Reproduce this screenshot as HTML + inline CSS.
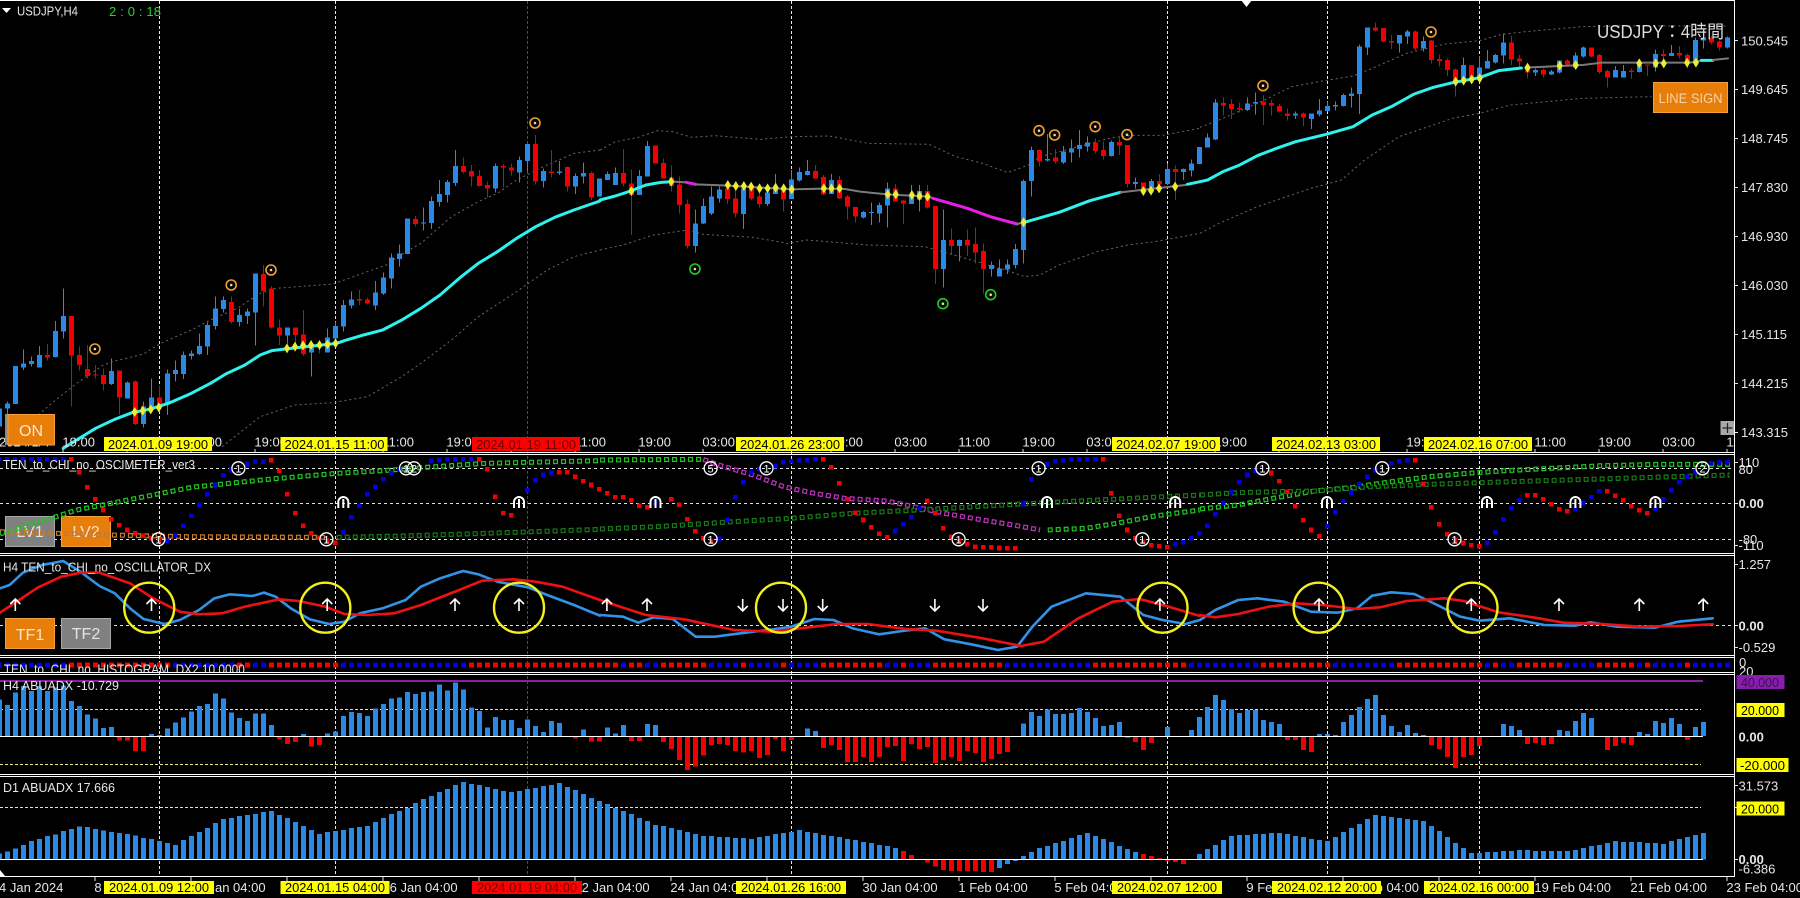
<!DOCTYPE html>
<html lang="ja"><head><meta charset="utf-8"><title>USDJPY,H4</title>
<style>
html,body{margin:0;padding:0;background:#000;overflow:hidden}
svg{display:block}
text{font-family:"Liberation Sans","Noto Sans CJK JP",sans-serif;font-size:13px;fill:#e6e6e6}
.n{vector-effect:non-scaling-stroke;fill:none}
.c{shape-rendering:crispEdges}
.tk{fill:#000}
.rk{fill:#6b0000}
.d{font-size:11px;text-anchor:middle;fill:#fff}
.bt{font-size:16px;text-anchor:middle;fill:#fbe2c4}
.bg{font-size:16px;text-anchor:middle;fill:#e4e4e4}
</style></head><body>
<svg width="1800" height="898" viewBox="0 0 1800 898" xmlns="http://www.w3.org/2000/svg">
<defs>
<path id="p1" class="n" transform="translate(0 430) scale(.38265 .33333)" d="M0 305L140 310 360 317 490 320 850 322"/>
<path id="p2" class="n" transform="translate(0 430) scale(.38265 .33333)" d="M880 322L1050 318 1270 310 1568 298"/>
<path id="p3" class="n" transform="translate(0 430) scale(.38265 .33333)" d="M0 312L120 270 200 240 290 220 400 195 500 172 600 160 700 148 800 138 880 130 1000 122 1100 113 1200 105 1270 100 1568 92"/>
<path id="p4" class="n" transform="translate(600 430) scale(.38265 .33333)" d="M0 90L270 88"/>
<path id="p5" class="n" transform="translate(600 430) scale(.38265 .33333)" d="M270 88L310 105 400 135 480 170 560 190 640 205 750 213 840 235 900 250 1000 270 1080 285 1150 300"/>
<path id="p6" class="n" transform="translate(600 430) scale(.38265 .33333)" d="M1170 300L1270 295 1350 280 1450 258 1568 240"/>
<path id="p7" class="n" transform="translate(600 430) scale(.38265 .33333)" d="M0 297L150 290 350 275 500 265 660 250 830 240 950 232 1100 222 1300 210 1568 195"/>
<path id="p8" class="n" transform="translate(1200 430) scale(.38265 .33333)" d="M0 237L100 225 200 203 300 183 400 172 500 155 600 140 700 130 800 122 950 113 1050 107 1200 103 1385 103"/>
<path id="p9" class="n" transform="translate(1200 430) scale(.38265 .33333)" d="M0 195L100 188 200 185 300 183 450 170 600 163 730 158 900 152 1100 145 1385 135"/>
<mask id="hollow" maskUnits="userSpaceOnUse" x="0" y="440" width="1800" height="120">
<rect x="0" y="440" width="1800" height="120" fill="#fff"/>
<g stroke="#000" stroke-width="2.600" stroke-dasharray="2.600 5.400" stroke-dashoffset="-1.200" fill="none">
<use href="#p1"/><use href="#p2"/><use href="#p3"/><use href="#p4"/><use href="#p5"/><use href="#p6"/><use href="#p7"/><use href="#p8"/><use href="#p9"/>
</g></mask>
<clipPath id="hc"><rect x="0" y="658" width="1734" height="14"/></clipPath>
</defs>
<rect width="1800" height="898" fill="#000"/>

<!-- vertical lines -->
<path d="M159.5 1V876M335.5 1V876M791.5 1V876M1167.5 1V876M1327.5 1V876M1479.5 1V876" stroke="#f4f490" stroke-width="1" stroke-dasharray="3 2" class="c"/>
<path d="M527.5 1V876" stroke="#b82020" stroke-width="1" stroke-dasharray="3 2" class="c"/>

<!-- envelopes -->
<g stroke="#6a6a6a" stroke-width="1" stroke-dasharray="2 3" fill="none">
<path class="n" transform="scale(.38265 .33333)" d="M100 1245L140 1205 200 1150 270 1095 300 1083 375 1062 420 1030 500 990 550 960 620 925 680 880 720 865 870 852 960 815 1010 795 1040 770 1100 730 1180 650 1250 605 1300 580 1350 540 1420 500 1500 460 1568 450"/>
<path class="n" transform="scale(.38265 .33333)" d="M580 1340L680 1250 770 1215 870 1208 960 1190 1050 1130 1100 1090 1180 1020 1250 950 1350 875 1430 810 1500 770 1568 750"/>
<path class="n" transform="translate(600 0) scale(.38265 .33333)" d="M0 450L40 425 100 412 150 392 190 395 240 412 300 407 420 418 500 410 600 408 700 430 860 433 930 470 1000 490 1065 518 1120 495 1150 470 1250 440 1330 415 1390 406 1470 406 1568 385"/>
<path class="n" transform="translate(600 0) scale(.38265 .33333)" d="M0 750L60 735 140 705 230 690 270 703 400 712 490 730 540 720 700 735 850 740 940 770 1060 810 1110 830 1150 825 1200 795 1300 755 1380 735 1450 725 1568 700"/>
<path class="n" transform="translate(1200 0) scale(.38265 .33333)" d="M0 382L50 360 150 310 240 260 320 243 400 228 450 205 540 160 640 132 730 122 790 103 850 95 1000 80 1100 78 1380 78"/>
<path class="n" transform="translate(1200 0) scale(.38265 .33333)" d="M0 700L50 670 150 620 290 565 370 540 430 480 520 410 660 355 730 340 810 315 1000 295 1180 290"/>
</g>

<!-- candles -->
<g transform="translate(7.3 0) scale(8 .33333)" class="c">
<path class="n" stroke="#2a88e6" stroke-width="1" d="M0 1205V1245M2 1048V1110M3 1070V1100M4 1038V1103M6 963V1073M7 865V1015M13 1075V1155M15 1145V1195M17 1205V1283M18 1135V1235M20 1108V1245M21 1082V1145M22 1055V1137M23 1052V1078M24 1000V1065M25 968V1065M26 890V988M27 890V938M29 925V980M30 925V972M31 820V1037M35 982V1030M38 1025V1130M40 985V1058M41 965V1040M42 900V995M43 875V925M46 843V930M47 817V885M48 760V865M49 733V800M52 622V692M53 590V687M54 540V620M55 540V608M56 450V558M61 490V578M64 470V548M65 432V515M67 505V563M69 483V525M71 520V582M72 487V550M75 515V540M76 502V555M79 510V585M80 423V530M86 628V758M87 595V672M88 560V645M89 560V608M92 555V687M95 555V618M96 522V582M98 510V597M99 502V545M100 480V527M103 522V582M107 633V655M108 608V675M109 608V668M110 548V683M113 555V612M114 555V635M117 628V863M119 718V785M123 785V830M124 778V830M125 778V822M126 732V805M127 538V790M128 440V590M130 402V485M132 438V492M133 418V487M134 390V472M135 410V455M138 422V470M141 532V565M143 537V572M145 490V555M147 505V540M148 478V530M150 400V443M151 297V420M155 293V333M156 278V343M161 335V357M163 340V387M164 297V350M165 305V335M166 305V332M167 280V320M168 263V322M169 133V342M170 83V165M174 105V158M175 90V132M177 110V155M182 172V245M184 168V245M185 150V205M186 162V190M187 100V190M191 205V228M193 210V225M194 181V220M196 158V205M197 140V172M201 198V233M202 195V233M204 180V218M206 148V215M208 135V168M211 113V195M212 108V145M215 110V145"/>
<path class="n" stroke="#e40000" stroke-width="1" d="M5 1032V1082M8 948V1220M9 1040V1112M10 1035V1135M11 1095V1135M12 1105V1172M14 1112V1243M16 1142V1275M19 1157V1235M28 890V970M32 795V920M33 858V985M34 958V1035M36 982V1040M37 930V1068M39 1022V1060M44 870V915M45 893V913M51 648V680M57 472V520M58 495V560M59 510V560M60 545V593M62 492V563M63 490V527M66 405V553M68 450V533M70 500V575M73 515V600M77 447V560M78 508V705M81 437V491M82 475V535M83 497V575M84 530V640M85 598V745M90 548V612M91 548V652M93 552V600M94 555V622M97 555V635M101 495V537M102 525V585M104 528V597M105 585V658M106 621V668M111 552V605M112 600V672M115 555V625M116 618V852M118 685V765M120 688V768M121 682V790M122 730V880M129 450V500M131 447V490M136 415V460M137 425V478M139 408V465M140 435V563M142 548V580M144 522V575M146 497V600M152 293V347M153 297V357M154 307V337M157 287V375M158 300V347M159 312V338M160 325V362M162 337V378M171 67V95M172 84V128M173 105V147M176 92V155M178 120V190M179 163V200M180 175V228M181 205V290M183 195V247M188 108V195M189 165V202M190 190V235M192 205V232M195 178V200M198 143V172M199 162V222M200 208V263M203 205V237M205 193V228M207 148V198M209 138V175M210 160V205M213 108V134M214 122V152"/>
<path class="n" stroke="#2a88e6" stroke-width="5" d="M-1 1225V1280M0 1210V1225M1 1098V1212M2 1090V1102M3 1083V1092M4 1065V1103M6 993V1071M7 948V995M13 1113V1152M15 1148V1195M17 1220V1272M18 1193V1222M20 1120V1213M21 1110V1122M22 1065V1122M23 1060V1068M24 1038V1062M25 975V1040M26 925V978M27 900V927M29 945V966M30 935V948M31 820V938M35 982V1007M38 1033V1058M40 1012V1058M41 978V1015M42 915V980M43 898V917M46 877V917M47 833V880M48 773V836M49 760V777M50 656V762M52 667V671M53 603V669M54 582V606M55 546V585M56 498V549M61 498V565M64 480V518M65 432V483M67 513V543M69 514V519M71 528V560M72 519V530M74 535V590M75 522V540M76 519V555M79 528V585M80 438V530M86 670V738M87 618V670M88 590V640M89 568V595M92 565V642M95 578V612M96 560V582M98 538V597M99 516V542M100 513V525M103 540V582M107 636V652M108 636V639M109 615V640M110 566V617M113 583V612M114 573V598M117 720V807M119 720V738M123 795V807M124 805V830M125 793V808M126 747V795M127 543V750M128 450V543M130 477V481M132 454V487M133 445V458M134 435V447M135 427V439M138 426V468M141 546V552M143 543V570M145 507V552M147 507V516M148 490V512M149 441V492M150 413V443M151 308V418M155 310V330M156 306V310M161 340V347M163 340V357M164 331V343M165 318V333M166 315V320M167 285V318M168 280V288M169 140V282M170 83V143M174 105V130M175 95V110M177 123V145M182 195V243M184 202V233M185 183V205M186 165V187M187 128V167M191 210V218M193 215V224M194 181V218M196 167V203M197 142V170M201 210V232M202 213V232M204 195V216M206 162V202M208 159V168M211 120V185M212 112V122M215 113V142"/>
<path class="n" stroke="#f00000" stroke-width="5" d="M5 1065V1072M8 948V1067M9 1065V1095M10 1107V1128M11 1123V1127M12 1125V1152M14 1112V1193M16 1145V1272M19 1193V1225M28 906V966M32 822V873M33 866V983M34 982V1007M36 982V1005M37 1003V1062M39 1030V1043M44 897V901M45 898V911M51 657V672M57 498V516M58 513V530M59 528V558M60 555V565M62 498V502M63 502V512M66 432V545M68 514V519M70 501V560M73 519V593M77 519V550M78 550V585M81 437V491M82 489V535M83 533V558M84 553V615M85 612V738M90 565V597M91 595V640M93 560V595M94 590V612M97 563V598M101 513V535M102 531V583M104 540V595M105 590V620M106 621V650M111 566V605M112 602V611M115 573V622M116 618V807M118 720V738M120 720V736M121 732V757M122 753V807M129 450V485M131 473V485M136 427V453M137 450V468M139 426V437M140 435V552M142 548V570M144 543V553M146 507V516M152 309V316M153 312V327M154 324V328M157 304V315M158 309V317M159 318V335M160 340V348M162 340V353M171 83V91M172 84V125M173 123V127M176 95V145M178 122V180M179 177V183M180 180V210M181 208V245M183 195V235M188 127V178M189 175V185M190 197V218M192 210V224M195 181V193M198 143V170M199 165V216M200 213V232M203 212V216M205 193V197M207 162V168M209 159V166M210 165V185M213 112V128M214 125V142"/>
</g>

<!-- moving average -->
<g fill="none" stroke-width="3" stroke-linejoin="round" stroke-linecap="round">
<path class="n" stroke="#2ef2ee" transform="scale(.38265 .33333)" d="M165 1345L200 1320 250 1285 300 1258 345 1238 390 1228 440 1210 500 1180 550 1150 590 1122 640 1095 680 1065 710 1052 745 1047 880 1030 900 1022 950 1005 1000 990 1050 960 1100 925 1150 885 1200 835 1250 790 1300 755 1350 715 1400 680 1450 652 1500 630 1568 603"/>
<path class="n" stroke="#2ef2ee" transform="translate(600 0) scale(.38265 .33333)" d="M0 600L40 588 80 573 120 555 160 547 190 545"/>
<path class="n" stroke="#7a7a7a" stroke-width="2" transform="translate(600 0) scale(.38265 .33333)" d="M190 545L225 547"/>
<path class="n" stroke="#e61ee6" transform="translate(600 0) scale(.38265 .33333)" d="M225 547L250 553"/>
<path class="n" stroke="#7a7a7a" stroke-width="2" transform="translate(600 0) scale(.38265 .33333)" d="M250 553L320 556 500 568 580 566 640 567 680 575 750 583 860 590 870 595"/>
<path class="n" stroke="#e61ee6" transform="translate(600 0) scale(.38265 .33333)" d="M870 595L960 625 1020 650 1090 672"/>
<path class="n" stroke="#7a7a7a" stroke-width="2" transform="translate(600 0) scale(.38265 .33333)" d="M1090 672L1115 665"/>
<path class="n" stroke="#2ef2ee" transform="translate(600 0) scale(.38265 .33333)" d="M1115 665L1200 637 1280 602 1360 577"/>
<path class="n" stroke="#7a7a7a" stroke-width="2" transform="translate(600 0) scale(.38265 .33333)" d="M1360 577L1530 555"/>
<path class="n" stroke="#2ef2ee" transform="translate(600 0) scale(.38265 .33333)" d="M1535 553L1568 545"/>
<path class="n" stroke="#2ef2ee" transform="translate(1200 0) scale(.38265 .33333)" d="M0 545L20 540 60 515 100 497 150 467 200 445 250 425 330 403 400 380 450 345 500 320 560 282 610 262 660 248 730 233 780 212 840 204"/>
<path class="n" stroke="#7a7a7a" stroke-width="2" transform="translate(1200 0) scale(.38265 .33333)" d="M850 203L1000 195 1050 188 1280 188 1305 183"/>
<path class="n" stroke="#2ef2ee" transform="translate(1200 0) scale(.38265 .33333)" d="M1310 181L1340 181"/>
<path class="n" stroke="#7a7a7a" stroke-width="2" transform="translate(1200 0) scale(.38265 .33333)" d="M1340 180L1380 175"/>
</g>

<!-- yellow diamonds -->
<path fill="#ecec34" transform="scale(.38265 .33333)" d="M352 1221l8 15-8 15-8-15zM373 1217l8 15-8 15-8-15zM394 1213l8 15-8 15-8-15zM415 1207l8 15-8 15-8-15zM750 1030l8 15-8 15-8-15zM771 1025l8 15-8 15-8-15zM792 1021l8 15-8 15-8-15zM813 1020l8 15-8 15-8-15zM835 1020l8 15-8 15-8-15zM856 1018l8 15-8 15-8-15zM877 1015l8 15-8 15-8-15z"/>
<path fill="#ecec34" transform="translate(600 0) scale(.38265 .33333)" d="M82 558l8 15-8 15-8-15zM186 530l8 15-8 15-8-15zM334 540l8 15-8 15-8-15zM355 543l8 15-8 15-8-15zM376 543l8 15-8 15-8-15zM395 545l8 15-8 15-8-15zM417 550l8 15-8 15-8-15zM438 550l8 15-8 15-8-15zM459 548l8 15-8 15-8-15zM480 550l8 15-8 15-8-15zM501 553l8 15-8 15-8-15zM585 550l8 15-8 15-8-15zM605 550l8 15-8 15-8-15zM626 550l8 15-8 15-8-15zM752 568l8 15-8 15-8-15zM773 568l8 15-8 15-8-15zM815 570l8 15-8 15-8-15zM835 573l8 15-8 15-8-15zM856 575l8 15-8 15-8-15zM1107 652l8 15-8 15-8-15zM1420 558l8 15-8 15-8-15zM1440 557l8 15-8 15-8-15zM1461 550l8 15-8 15-8-15zM1503 545l8 15-8 15-8-15z"/>
<path fill="#ecec34" transform="translate(1200 0) scale(.38265 .33333)" d="M668 230l8 15-8 15-8-15zM689 227l8 15-8 15-8-15zM710 223l8 15-8 15-8-15zM731 220l8 15-8 15-8-15zM856 188l8 15-8 15-8-15zM940 182l8 15-8 15-8-15zM982 180l8 15-8 15-8-15zM1148 175l8 15-8 15-8-15zM1191 175l8 15-8 15-8-15zM1212 175l8 15-8 15-8-15zM1273 173l8 15-8 15-8-15zM1296 173l8 15-8 15-8-15z"/>

<!-- rings -->
<g fill="none" stroke="#f0a030" stroke-width="1.6">
<circle cx="94.9" cy="349" r="5"/><circle cx="231.2" cy="285" r="5"/><circle cx="271" cy="270" r="5"/><circle cx="535" cy="123" r="5"/><circle cx="1039" cy="130.7" r="5"/><circle cx="1054.6" cy="135" r="5"/><circle cx="1095.2" cy="126.7" r="5"/><circle cx="1127" cy="134.7" r="5"/><circle cx="1263" cy="85.7" r="5"/><circle cx="1431" cy="32" r="5"/>
</g>
<g fill="none" stroke="#20d020" stroke-width="1.6">
<circle cx="694.9" cy="269" r="5"/><circle cx="942.9" cy="303.7" r="5"/><circle cx="990.7" cy="294.7" r="5"/>
</g>
<g fill="#e8d8b0">
<circle cx="94.9" cy="349" r="1.3"/><circle cx="231.2" cy="285" r="1.3"/><circle cx="271" cy="270" r="1.3"/><circle cx="535" cy="123" r="1.3"/><circle cx="1039" cy="130.7" r="1.3"/><circle cx="1054.6" cy="135" r="1.3"/><circle cx="1095.2" cy="126.7" r="1.3"/><circle cx="1127" cy="134.7" r="1.3"/><circle cx="1263" cy="85.7" r="1.3"/><circle cx="1431" cy="32" r="1.3"/><circle cx="694.9" cy="269" r="1.3"/><circle cx="942.9" cy="303.7" r="1.3"/><circle cx="990.7" cy="294.7" r="1.3"/>
</g>

<!-- main time labels -->
<g>
<text x="-1" y="446.5">2024/1/4</text>
<text x="62.4" y="446.5">19:00</text><text x="126.4" y="446.5">03:00</text><text x="190.4" y="446.5">11:00</text>
<text x="254.4" y="446.5">19:00</text><text x="318.4" y="446.5">03:00</text><text x="382.4" y="446.5">11:00</text>
<text x="446.4" y="446.5">19:00</text><text x="510.4" y="446.5">03:00</text><text x="574.4" y="446.5">11:00</text>
<text x="638.4" y="446.5">19:00</text><text x="702.4" y="446.5">03:00</text><text x="766.4" y="446.5">11:00</text>
<text x="830.4" y="446.5">19:00</text><text x="894.4" y="446.5">03:00</text><text x="958.4" y="446.5">11:00</text>
<text x="1022.4" y="446.5">19:00</text><text x="1086.4" y="446.5">03:00</text><text x="1150.4" y="446.5">11:00</text>
<text x="1214.4" y="446.5">19:00</text><text x="1278.4" y="446.5">03:00</text><text x="1342.4" y="446.5">11:00</text>
<text x="1406.4" y="446.5">19:00</text><text x="1470.4" y="446.5">03:00</text><text x="1534.4" y="446.5">11:00</text>
<text x="1598.4" y="446.5">19:00</text><text x="1662.4" y="446.5">03:00</text>
<svg x="0" y="430" width="1734" height="22"><text x="1726.4" y="16.5">11:00</text></svg>
</g>
<path stroke="#e6e6e6" stroke-width="1" class="c" d="M63 449V452M127 449V452M191 449V452M255 449V452M319 449V452M383 449V452M447 449V452M511 449V452M575 449V452M639 449V452M703 449V452M767 449V452M831 449V452M895 449V452M959 449V452M1023 449V452M1087 449V452M1151 449V452M1215 449V452M1279 449V452M1343 449V452M1407 449V452M1471 449V452M1535 449V452M1599 449V452M1663 449V452M1727 449V452"/>
<!-- yellow / red main time tags -->
<g class="c"><rect x="104" y="437" width="108" height="14" fill="#ff0"/><rect x="280.5" y="437" width="107" height="14" fill="#ff0"/><rect x="472" y="437" width="108" height="14" fill="#f00"/><rect x="736" y="437" width="108" height="14" fill="#ff0"/><rect x="1112" y="437" width="108" height="14" fill="#ff0"/><rect x="1272" y="437" width="108" height="14" fill="#ff0"/><rect x="1424" y="437" width="108" height="14" fill="#ff0"/></g>
<text class="tk" x="108" y="449" textLength="100" lengthAdjust="spacingAndGlyphs">2024.01.09 19:00</text>
<text class="tk" x="284.5" y="449" textLength="100" lengthAdjust="spacingAndGlyphs">2024.01.15 11:00</text>
<text class="rk" x="476" y="449" textLength="100" lengthAdjust="spacingAndGlyphs">2024.01.19 11:00</text>
<text class="tk" x="740" y="449" textLength="100" lengthAdjust="spacingAndGlyphs">2024.01.26 23:00</text>
<text class="tk" x="1116" y="449" textLength="100" lengthAdjust="spacingAndGlyphs">2024.02.07 19:00</text>
<text class="tk" x="1276" y="449" textLength="100" lengthAdjust="spacingAndGlyphs">2024.02.13 03:00</text>
<text class="tk" x="1428" y="449" textLength="100" lengthAdjust="spacingAndGlyphs">2024.02.16 07:00</text>

<!-- price axis -->
<g>
<text x="1741" y="45.5">150.545</text><text x="1741" y="94">149.645</text><text x="1741" y="143">148.745</text><text x="1741" y="192">147.830</text><text x="1741" y="241">146.930</text><text x="1741" y="290">146.030</text><text x="1741" y="339">145.115</text><text x="1741" y="388">144.215</text><text x="1741" y="437">143.315</text>
</g>
<path stroke="#e6e6e6" class="c" d="M1735 40.500H1738M1735 89.500H1738M1735 138.500H1738M1735 187.500H1738M1735 236.500H1738M1735 285.500H1738M1735 334.500H1738M1735 383.500H1738M1735 432.500H1738M1735 462.500H1738M1735 503.500H1738M1735 545.500H1738M1735 564.500H1738M1735 625.500H1738M1735 647.500H1738M1735 785.500H1738M1735 807.500H1738M1735 859.500H1738"/>

<!-- chart header text -->
<path d="M2 8H11L6.500 13Z" fill="#fff"/>
<text x="17" y="15.500" font-size="12" textLength="61" lengthAdjust="spacingAndGlyphs">USDJPY,H4</text>
<text x="109" y="16" style="fill:#2ed02e;font-size:13px" textLength="52" lengthAdjust="spacing">2 : 0 : 18</text>
<text x="1597" y="38" style="font-size:18px;fill:#dcdcdc" textLength="127" lengthAdjust="spacingAndGlyphs">USDJPY：4時間</text>
<path d="M1241 0H1252L1246.500 7Z" fill="#fff"/>

<!-- main buttons -->
<rect x="1653.500" y="82.500" width="74" height="30" fill="#e87e0a" stroke="#f2a040"/>
<text x="1690.500" y="103" style="font-size:13.500px;text-anchor:middle;fill:#f6d2a4" textLength="64" lengthAdjust="spacingAndGlyphs">LINE SIGN</text>
<rect x="5" y="414" width="3" height="31" fill="#888"/>
<rect x="8" y="414.500" width="46.500" height="30.500" fill="#e87e0a" stroke="#f2a040"/>
<text x="31" y="436" class="bt" style="font-size:16px;fill:#f8e6d0">ON</text>
<rect x="1720.500" y="421" width="13.500" height="14" fill="#a8a8a8"/>
<path d="M1727.500 423V433M1722.500 428H1732.500" stroke="#222" stroke-width="1.200"/>

<!-- oscimeter window -->
<path stroke="#e0e0e0" stroke-dasharray="3 3" class="c" d="M0 468.500H1734M0 503.500H1734M0 539.500H1734"/>
<rect x="5.500" y="516.500" width="49" height="30" fill="#808080" stroke="#a8a8a8"/>
<rect x="61.500" y="516.500" width="49" height="30" fill="#e87e0a" stroke="#f2a040"/>
<text x="30" y="537" class="bg">LV1</text>
<text x="86" y="537" class="bt">LV2</text>
<g mask="url(#hollow)" stroke-width="5" stroke-dasharray="5 3" fill="none">
<use href="#p1" stroke="#c47a30"/><use href="#p2" stroke="#187a18"/><use href="#p3" stroke="#22c422"/><use href="#p4" stroke="#22c422"/><use href="#p5" stroke="#c032c0"/><use href="#p6" stroke="#22c422"/><use href="#p7" stroke="#187a18"/><use href="#p8" stroke="#22c422"/><use href="#p9" stroke="#187a18"/>
</g>
<g transform="translate(7.3 430) scale(8 .33333)" stroke-width="4.500" stroke-linecap="square" class="c">
<path class="n" stroke="#f00000" d="M8 88v.1M9 127v.1M10 172v.1M11 208v.1M12 240v.1M13 268v.1M14 286v.1M15 300v.1M16 310v.1M17 317v.1M18 325v.1M19 330v.1M33 91v.1M34 122v.1M35 193v.1M36 250v.1M37 287v.1M38 310v.1M39 323v.1M40 332v.1M41 338v.1M59 88v.1M60 118v.1M61 200v.1M62 250v.1M63 256v.1M69 127v.1M70 127v.1M71 140v.1M72 154v.1M73 165v.1M74 178v.1M75 190v.1M76 202v.1M77 202v.1M78 211v.1M79 227v.1M80 232v.1M83 208v.1M84 224v.1M85 268v.1M86 304v.1M87 325v.1M88 335v.1M102 88v.1M103 112v.1M104 160v.1M105 208v.1M106 248v.1M107 270v.1M108 292v.1M109 311v.1M110 322v.1M115 212v.1M116 250v.1M117 295v.1M118 320v.1M119 332v.1M120 343v.1M121 350v.1M122 352v.1M123 352v.1M124 354v.1M125 355v.1M126 355v.1M137 88v.1M138 190v.1M139 257v.1M140 300v.1M141 325v.1M142 335v.1M143 346v.1M144 349v.1M145 352v.1M158 129v.1M159 154v.1M160 185v.1M161 229v.1M162 271v.1M163 300v.1M164 319v.1M176 91v.1M177 162v.1M178 232v.1M179 283v.1M180 313v.1M181 330v.1M182 339v.1M183 346v.1M184 349v.1M190 196v.1M191 196v.1M192 208v.1M193 223v.1M194 238v.1M195 244v.1M200 184v.1M201 197v.1M202 211v.1M203 229v.1M204 241v.1M205 250v.1"/>
<path class="n" stroke="#0000e6" d="M-1 88v.1M0 88v.1M1 88v.1M2 88v.1M3 88v.1M4 88v.1M5 88v.1M6 88v.1M7 88v.1M20 332v.1M21 316v.1M22 287v.1M23 257v.1M24 224v.1M25 193v.1M26 165v.1M27 136v.1M28 120v.1M30 102v.1M31 95v.1M32 95v.1M42 307v.1M43 262v.1M44 227v.1M45 193v.1M46 170v.1M47 148v.1M48 130v.1M49 118v.1M53 92v.1M54 90v.1M55 88v.1M56 88v.1M57 88v.1M58 88v.1M65 181v.1M66 151v.1M67 135v.1M68 129v.1M81 218v.1M89 327v.1M90 270v.1M91 202v.1M92 157v.1M93 127v.1M94 118v.1M96 108v.1M97 97v.1M98 94v.1M99 91v.1M100 91v.1M101 88v.1M111 303v.1M112 283v.1M113 262v.1M114 235v.1M127 222v.1M128 148v.1M130 102v.1M131 94v.1M132 91v.1M133 88v.1M134 88v.1M135 88v.1M136 88v.1M146 343v.1M147 337v.1M148 325v.1M149 310v.1M150 287v.1M151 253v.1M152 218v.1M153 186v.1M154 157v.1M155 135v.1M156 122v.1M165 289v.1M166 247v.1M167 214v.1M168 188v.1M169 162v.1M170 140v.1M171 120v.1M173 100v.1M174 94v.1M175 91v.1M185 338v.1M186 307v.1M187 268v.1M188 235v.1M189 211v.1M196 238v.1M197 218v.1M198 202v.1M199 184v.1M206 236v.1M207 208v.1M208 181v.1M209 157v.1M210 140v.1M211 127v.1M213 100v.1M214 97v.1M215 97v.1"/>
</g>
<g fill="none" stroke="#fff" stroke-width="1.300">
<circle cx="158.400" cy="539.300" r="6.500"/><circle cx="238.400" cy="468.300" r="6.500"/><circle cx="326.400" cy="539.300" r="6.500"/><circle cx="406" cy="468.300" r="6.500"/><circle cx="414" cy="468.300" r="6.500"/><circle cx="710.600" cy="468.300" r="6.500"/><circle cx="710.600" cy="539.300" r="6.500"/><circle cx="766.500" cy="468.300" r="6.500"/><circle cx="958.600" cy="539.300" r="6.500"/><circle cx="1038.600" cy="468.300" r="6.500"/><circle cx="1142.300" cy="539.300" r="6.500"/><circle cx="1262.400" cy="468.300" r="6.500"/><circle cx="1382.200" cy="468.300" r="6.500"/><circle cx="1454.500" cy="539.300" r="6.500"/><circle cx="1702.500" cy="468.300" r="6.500"/>
</g>
<path fill="none" stroke="#fff" stroke-width="2" d="M338.300 508v-6a5 5 0 0 1 10 0v6M343.300 499v9M514 508v-6a5 5 0 0 1 10 0v6M519 499v9M650.500 508v-6a5 5 0 0 1 10 0v6M655.500 499v9M1042 508v-6a5 5 0 0 1 10 0v6M1047 499v9M1170.200 508v-6a5 5 0 0 1 10 0v6M1175.200 499v9M1322 508v-6a5 5 0 0 1 10 0v6M1327 499v9M1482 508v-6a5 5 0 0 1 10 0v6M1487 499v9M1570.400 508v-6a5 5 0 0 1 10 0v6M1575.400 499v9M1650.400 508v-6a5 5 0 0 1 10 0v6M1655.400 499v9"/>
<g>
<text class="d" x="158.400" y="543.300">1</text><text class="d" x="238.400" y="472.300">1</text><text class="d" x="326.400" y="543.300">1</text><text class="d" x="406" y="472.300">1</text><text class="d" x="414" y="472.300">2</text><text class="d" x="710.600" y="472.300">5</text><text class="d" x="710.600" y="543.300">1</text><text class="d" x="766.500" y="472.300">1</text><text class="d" x="958.600" y="543.300">1</text><text class="d" x="1038.600" y="472.300">1</text><text class="d" x="1142.300" y="543.300">1</text><text class="d" x="1262.400" y="472.300">1</text><text class="d" x="1382.200" y="472.300">1</text><text class="d" x="1454.500" y="543.300">1</text><text class="d" x="1702.500" y="472.300">2</text>
</g>
<text x="3" y="469" textLength="192" lengthAdjust="spacingAndGlyphs">TEN_to_CHI_no_OSCIMETER_ver3</text>
<text x="1738.500" y="467">110</text><text x="1738.500" y="474">80</text>
<text x="1738.500" y="508" style="font-weight:bold">0.00</text>
<text x="1738.500" y="544">-80</text><text x="1738.500" y="550">-110</text>

<!-- oscillator window -->
<path stroke="#e0e0e0" stroke-dasharray="3 3" class="c" d="M0 625.500H1734"/>
<g fill="none" stroke-width="2.600" stroke-linejoin="round" stroke-linecap="round">
<path class="n" stroke="#3293e6" transform="translate(0 430) scale(.38265 .33333)" d="M0 475L25 465 60 428 110 405 165 393 210 425 260 468 300 490 340 535 375 567 430 582 470 570 520 540 560 505 600 493 660 498 690 488 720 500 760 535 810 568 860 582 900 575 940 550 1000 535 1060 510 1100 470 1150 445 1210 423 1250 433 1300 455 1380 472 1430 495 1500 525 1568 557"/>
<path class="n" stroke="#3293e6" transform="translate(600 430) scale(.38265 .33333)" d="M0 555L60 560 100 578 140 562 190 567 250 620 300 620 380 608 440 600 500 590 560 567 610 570 660 595 730 613 790 603 850 595 900 628 970 643 1040 660 1090 650 1130 590 1180 530 1270 490 1360 500 1420 555 1470 570 1530 582 1568 570"/>
<path class="n" stroke="#3293e6" transform="translate(1200 430) scale(.38265 .33333)" d="M0 570L40 540 100 510 150 505 220 515 290 545 360 548 410 535 450 497 500 487 560 492 620 525 680 560 730 572 810 565 900 585 980 587 1020 577 1090 590 1190 593 1250 575 1340 565"/>
<path class="n" stroke="#ee1111" transform="translate(0 430) scale(.38265 .33333)" d="M0 548L50 510 100 472 160 440 210 428 260 428 340 460 400 505 470 545 520 553 580 550 640 530 730 508 780 513 850 530 900 552 960 555 1030 550 1100 525 1200 480 1260 452 1340 448 1400 455 1470 470 1568 510"/>
<path class="n" stroke="#ee1111" transform="translate(600 430) scale(.38265 .33333)" d="M0 510L60 533 120 555 220 568 350 600 450 605 560 590 620 582 700 582 800 597 880 602 1000 625 1100 648 1160 635 1250 565 1340 515 1410 507 1480 528 1568 558"/>
<path class="n" stroke="#ee1111" transform="translate(1200 430) scale(.38265 .33333)" d="M0 555L40 562 100 552 180 530 250 520 320 525 410 537 470 532 540 513 640 505 690 513 780 547 870 562 950 578 1050 582 1150 590 1250 588 1340 583"/>
</g>
<path fill="none" stroke="#fff" stroke-width="1.600" d="M15.300 611v-12m-5 5l5-5 5 5M151.500 611v-12m-5 5l5-5 5 5M327.200 611v-12m-5 5l5-5 5 5M455 611v-12m-5 5l5-5 5 5M519 611v-12m-5 5l5-5 5 5M606.900 611v-12m-5 5l5-5 5 5M647 611v-12m-5 5l5-5 5 5M1159.900 611v-12m-5 5l5-5 5 5M1319 611v-12m-5 5l5-5 5 5M1471.300 611v-12m-5 5l5-5 5 5M1559 611v-12m-5 5l5-5 5 5M1639.300 611v-12m-5 5l5-5 5 5M1703.200 611v-12m-5 5l5-5 5 5M742.700 599v12m-5-5l5 5 5-5M783 599v12m-5-5l5 5 5-5M822.700 599v12m-5-5l5 5 5-5M934.900 599v12m-5-5l5 5 5-5M983 599v12m-5-5l5 5 5-5"/>
<g fill="none" stroke="#f2f01c" stroke-width="2.400">
<circle cx="149.200" cy="607.700" r="25"/><circle cx="325.300" cy="607.700" r="25"/><circle cx="519" cy="607.700" r="25"/><circle cx="781" cy="607.700" r="25"/><circle cx="1162.500" cy="607.700" r="25"/><circle cx="1318.600" cy="607.700" r="25"/><circle cx="1472.500" cy="607.700" r="25"/>
</g>
<rect x="5.500" y="618.500" width="49" height="30" fill="#e87e0a" stroke="#f2a040"/>
<rect x="61.500" y="618.500" width="49" height="30" fill="#808080" stroke="#a8a8a8"/>
<text x="30" y="640" class="bt">TF1</text>
<text x="86" y="639" class="bg">TF2</text>
<text x="3" y="571.500" textLength="208" lengthAdjust="spacingAndGlyphs">H4 TEN_to_CHI_no_OSCILLATOR_DX</text>
<text x="1738.500" y="569">1.257</text>
<text x="1738.500" y="630.500" style="font-weight:bold">0.00</text>
<text x="1738.500" y="652">-0.529</text>

<!-- histogram strip -->
<g transform="translate(4.800 665) scale(8 1)" stroke-width="5" stroke-dasharray="5 3" class="c">
<path class="n" stroke="#0000e6" d="M-1 0H7.630M21 0H28.630M31 0H32.630M42 0H57.630M77 0H77.630M80 0H81.630M88 0H91.630M93 0H96.630M98 0H101.630M110 0H111.630M113 0H115.630M125 0H135.630M148 0H156.630M166 0H173.630M185 0H185.630M187 0H188.630M195 0H198.630M204 0H204.630M206 0H209.630M211 0H215.630"/>
<path class="n" stroke="#f00000" d="M8 0H20.630M29 0H30.630M33 0H41.630M58 0H76.630M78 0H79.630M82 0H87.630M92 0H92.630M97 0H97.630M102 0H109.630M112 0H112.630M116 0H124.630M136 0H147.630M157 0H165.630M174 0H184.630M186 0H186.630M189 0H194.630M199 0H203.630M205 0H205.630M210 0H210.630"/>
</g>
<g clip-path="url(#hc)"><text x="3.800" y="674" textLength="241" lengthAdjust="spacingAndGlyphs" style="font-size:14px">TEN_to_CHI_no_HISTOGRAM_DX2 10.0000</text></g>
<text x="1739" y="667">0</text><text x="1739" y="676">20</text>

<!-- H4 ABUADX -->
<rect x="0" y="680" width="1703" height="2" fill="#8c1ea4"/>
<path stroke="#eaea80" stroke-dasharray="3 2" class="c" d="M0 709.500H1701M0 764.500H1701"/>
<g transform="translate(7.3 430) scale(8 .33333)" stroke-width="5" class="c">
<path class="n" stroke="#2a88e6" d="M-1 918V808M0 918V825M1 918V787M2 918V768M3 918V783M4 918V768M5 918V783M6 918V772M7 918V767M8 918V813M9 918V828M10 918V853M11 918V865M12 918V894M13 918V891M18 918V912M19 918V915M20 918V895M21 918V877M22 918V862M23 918V845M24 918V828M25 918V822M26 918V790M27 918V805M28 918V847M29 918V864M30 918V873M31 918V850M32 918V850M33 918V885M37 918V912M40 918V910M41 918V904M42 918V858M43 918V846M44 918V849M45 918V858M46 918V835M47 918V822M48 918V805M49 918V802M50 918V786M51 918V792M52 918V786M53 918V785M54 918V763M55 918V782M56 918V757M57 918V778M58 918V832M59 918V843M60 918V892M61 918V861M62 918V870M63 918V870M64 918V894M65 918V868M66 918V888M67 918V906M68 918V873M69 918V879M72 918V898M75 918V892M76 918V910M77 918V885M80 918V882M81 918V885M100 918V895M101 918V903M127 918V880M128 918V846M129 918V858M130 918V838M131 918V852M132 918V852M133 918V849M134 918V834M135 918V846M136 918V864M137 918V888M138 918V885M139 918V876M145 918V891M148 918V900M149 918V861M150 918V831M151 918V795M152 918V810M153 918V837M154 918V849M155 918V840M156 918V840M157 918V870M158 918V876M159 918V882M164 918V912M165 918V912M166 918V915M167 918V876M168 918V855M169 918V831M170 918V807M171 918V795M172 918V855M173 918V888M174 918V906M175 918V885M176 918V909M177 918V915M187 918V882M188 918V888M189 918V900M194 918V900M195 918V903M196 918V873M197 918V849M198 918V864M204 918V906M205 918V912M206 918V873M207 918V879M208 918V864M209 918V882M211 918V891M212 918V876"/>
<path class="n" stroke="#f00000" d="M14 918V932M15 918V932M16 918V963M17 918V963M34 918V929M35 918V942M36 918V936M38 918V950M39 918V945M71 918V926M73 918V934M74 918V934M78 918V933M79 918V933M82 918V936M83 918V957M84 918V990M85 918V1020M86 918V1010M87 918V977M88 918V945M89 918V942M90 918V945M91 918V963M92 918V968M93 918V963M94 918V984M95 918V975M96 918V927M97 918V963M98 918V930M102 918V954M103 918V945M104 918V960M105 918V996M106 918V996M107 918V981M108 918V996M109 918V981M110 918V951M111 918V948M112 918V993M113 918V942M114 918V957M115 918V951M116 918V999M117 918V990M118 918V981M119 918V993M120 918V963M121 918V969M122 918V996M123 918V987M124 918V972M125 918V966M126 918V921M140 918V924M141 918V936M142 918V960M143 918V939M146 918V921M147 918V921M160 918V930M161 918V930M162 918V960M163 918V966M178 918V945M179 918V957M180 918V981M181 918V1014M182 918V981M183 918V975M184 918V948M190 918V942M191 918V939M192 918V945M193 918V942M200 918V960M201 918V948M202 918V939M203 918V945M210 918V930"/>
</g>
<rect x="0" y="736" width="1703" height="1" fill="#fff"/>
<text x="3" y="690" textLength="116" lengthAdjust="spacingAndGlyphs">H4 ABUADX  -10.729</text>
<g class="c"><rect x="1736.500" y="675" width="48" height="14" fill="#8a1cb0"/><rect x="1736.500" y="703" width="48" height="14" fill="#ff0"/><rect x="1736.500" y="758" width="52" height="14" fill="#ff0"/><rect x="1736.500" y="801.500" width="48" height="14" fill="#ff0"/></g>
<text x="1741" y="687" style="fill:#3c1050" textLength="38" lengthAdjust="spacingAndGlyphs">40.000</text>
<text class="tk" x="1741" y="715" textLength="38" lengthAdjust="spacingAndGlyphs">20.000</text>
<text x="1738.500" y="741.500" style="font-weight:bold">0.00</text>
<text class="tk" x="1740" y="770" textLength="45" lengthAdjust="spacingAndGlyphs">-20.000</text>

<!-- D1 ABUADX -->
<path stroke="#eaea80" stroke-dasharray="3 2" class="c" d="M0 807.500H1701"/>
<g transform="translate(7.3 430) scale(8 .33333)" stroke-width="5" class="c">
<path class="n" stroke="#2a88e6" d="M-1 1288V1270M0 1288V1265M1 1288V1255M2 1288V1245M3 1288V1233M4 1288V1227M5 1288V1218M6 1288V1213M7 1288V1203M8 1288V1197M9 1288V1189M10 1288V1191M11 1288V1197M12 1288V1201M13 1288V1206M14 1288V1209M15 1288V1212M16 1288V1216M17 1288V1224M18 1288V1227M19 1288V1233M20 1288V1239M21 1288V1245M22 1288V1230M23 1288V1218M24 1288V1206M25 1288V1194M26 1288V1179M27 1288V1167M28 1288V1164M29 1288V1158M30 1288V1155M31 1288V1152M32 1288V1146M33 1288V1143M34 1288V1155M35 1288V1164M36 1288V1176M37 1288V1188M38 1288V1200M39 1288V1212M40 1288V1206M41 1288V1203M42 1288V1200M43 1288V1194M44 1288V1191M45 1288V1188M46 1288V1176M47 1288V1164M48 1288V1152M49 1288V1143M50 1288V1134M51 1288V1119M52 1288V1107M53 1288V1098M54 1288V1086M55 1288V1077M56 1288V1065M57 1288V1056M58 1288V1062M59 1288V1065M60 1288V1071M61 1288V1077M62 1288V1083M63 1288V1086M64 1288V1083M65 1288V1077M66 1288V1074M67 1288V1068M68 1288V1065M69 1288V1059M70 1288V1071M71 1288V1080M72 1288V1092M73 1288V1104M74 1288V1113M75 1288V1122M76 1288V1134M77 1288V1143M78 1288V1152M79 1288V1164M80 1288V1173M81 1288V1185M82 1288V1188M83 1288V1194M84 1288V1200M85 1288V1206M86 1288V1212M87 1288V1218M88 1288V1218M89 1288V1221M90 1288V1221M91 1288V1224M92 1288V1224M93 1288V1227M94 1288V1221M95 1288V1218M96 1288V1212M97 1288V1209M98 1288V1206M99 1288V1200M100 1288V1206M101 1288V1209M102 1288V1215M103 1288V1218M104 1288V1221M105 1288V1227M106 1288V1230M107 1288V1236M108 1288V1239M109 1288V1245M110 1288V1248M111 1288V1254M124 1288V1314M125 1288V1302M126 1288V1293M127 1288V1278M128 1288V1266M129 1288V1254M130 1288V1248M131 1288V1239M132 1288V1233M133 1288V1224M134 1288V1215M135 1288V1209M136 1288V1218M137 1288V1227M138 1288V1236M139 1288V1248M140 1288V1257M141 1288V1266M149 1288V1272M150 1288V1257M151 1288V1245M152 1288V1230M153 1288V1218M154 1288V1215M155 1288V1215M156 1288V1212M157 1288V1212M158 1288V1209M159 1288V1209M160 1288V1212M161 1288V1218M162 1288V1221M163 1288V1227M164 1288V1230M165 1288V1233M166 1288V1221M167 1288V1206M168 1288V1194M169 1288V1182M170 1288V1167M171 1288V1155M172 1288V1158M173 1288V1161M174 1288V1164M175 1288V1167M176 1288V1170M177 1288V1173M178 1288V1188M179 1288V1203M180 1288V1221M181 1288V1239M182 1288V1254M183 1288V1269M184 1288V1269M185 1288V1266M186 1288V1266M187 1288V1263M188 1288V1263M189 1288V1260M190 1288V1260M191 1288V1263M192 1288V1263M193 1288V1263M194 1288V1263M195 1288V1263M196 1288V1260M197 1288V1254M198 1288V1248M199 1288V1245M200 1288V1239M201 1288V1233M202 1288V1236M203 1288V1236M204 1288V1236M205 1288V1239M206 1288V1239M207 1288V1242M208 1288V1233M209 1288V1227M210 1288V1221M211 1288V1215M212 1288V1209"/>
<path class="n" stroke="#f00000" d="M112 1288V1263M113 1288V1275M115 1288V1297M116 1288V1310M117 1288V1320M118 1288V1323M119 1288V1323M120 1288V1323M121 1288V1323M122 1288V1326M123 1288V1326M142 1288V1272M143 1288V1278M144 1288V1284M145 1288V1293M146 1288V1296M147 1288V1302"/>
</g>
<rect x="0" y="859" width="1703" height="1" fill="#fff"/>
<text x="3" y="792" textLength="112" lengthAdjust="spacingAndGlyphs">D1 ABUADX  17.666</text>
<text x="1738.500" y="790.500">31.573</text>
<text class="tk" x="1741" y="813.500" textLength="38" lengthAdjust="spacingAndGlyphs">20.000</text>
<text x="1738.500" y="864" style="font-weight:bold">0.00</text>
<text x="1738.500" y="873.500">-6.386</text>

<!-- separators -->
<g fill="#fff" class="c">
<rect x="0" y="0" width="1734" height="1"/>
<rect x="0" y="452" width="1734" height="1"/><rect x="0" y="454" width="1734" height="1"/>
<rect x="0" y="553" width="1734" height="1"/><rect x="0" y="555" width="1734" height="1"/>
<rect x="0" y="655" width="1734" height="1"/><rect x="0" y="657" width="1734" height="1"/>
<rect x="0" y="672" width="1734" height="1"/><rect x="0" y="674" width="1734" height="1"/>
<rect x="0" y="774" width="1734" height="1"/><rect x="0" y="776" width="1734" height="1"/>
<rect x="0" y="876" width="1734" height="1"/>
<rect x="1734" y="0" width="1" height="877"/>
</g>
<path d="M0 870L5 876H0Z" fill="#fff"/>

<!-- bottom time axis -->
<path stroke="#e6e6e6" class="c" d="M95 877V881M191 877V881M287 877V881M383 877V881M479 877V881M575 877V881M671 877V881M767 877V881M863 877V881M959 877V881M1055 877V881M1151 877V881M1247 877V881M1343 877V881M1439 877V881M1535 877V881M1631 877V881M1727 877V881"/>
<g>
<text x="-1" y="892">4 Jan 2024</text><text x="94.400" y="892">8 Jan 04:00</text><text x="190.400" y="892">10 Jan 04:00</text><text x="286.400" y="892">12 Jan 04:00</text><text x="382.400" y="892">16 Jan 04:00</text><text x="478.400" y="892">18 Jan 04:00</text><text x="574.400" y="892">22 Jan 04:00</text><text x="670.400" y="892">24 Jan 04:00</text><text x="766.400" y="892">26 Jan 04:00</text><text x="862.400" y="892">30 Jan 04:00</text><text x="958.400" y="892">1 Feb 04:00</text><text x="1054.400" y="892">5 Feb 04:00</text><text x="1150.400" y="892">7 Feb 04:00</text><text x="1246.400" y="892">9 Feb 04:00</text><text x="1342.400" y="892">13 Feb 04:00</text><text x="1438.400" y="892">15 Feb 04:00</text><text x="1534.400" y="892">19 Feb 04:00</text><text x="1630.400" y="892">21 Feb 04:00</text><text x="1726.400" y="892">23 Feb 04:00</text>
</g>
<g class="c"><rect x="104" y="881" width="110" height="13" fill="#ff0"/><rect x="280.500" y="881" width="109" height="13" fill="#ff0"/><rect x="472" y="881" width="110" height="13" fill="#f00"/><rect x="736" y="881" width="110" height="13" fill="#ff0"/><rect x="1112" y="881" width="110" height="13" fill="#ff0"/><rect x="1272" y="881" width="109" height="13" fill="#ff0"/><rect x="1424" y="881" width="110" height="13" fill="#ff0"/></g>
<text class="tk" x="109" y="892" textLength="100" lengthAdjust="spacingAndGlyphs">2024.01.09 12:00</text>
<text class="tk" x="285" y="892" textLength="100" lengthAdjust="spacingAndGlyphs">2024.01.15 04:00</text>
<text class="rk" x="477" y="892" textLength="100" lengthAdjust="spacingAndGlyphs">2024.01.19 04:00</text>
<text class="tk" x="741" y="892" textLength="100" lengthAdjust="spacingAndGlyphs">2024.01.26 16:00</text>
<text class="tk" x="1117" y="892" textLength="100" lengthAdjust="spacingAndGlyphs">2024.02.07 12:00</text>
<text class="tk" x="1277" y="892" textLength="100" lengthAdjust="spacingAndGlyphs">2024.02.12 20:00</text>
<text class="tk" x="1429" y="892" textLength="100" lengthAdjust="spacingAndGlyphs">2024.02.16 00:00</text>
</svg>
</body></html>
